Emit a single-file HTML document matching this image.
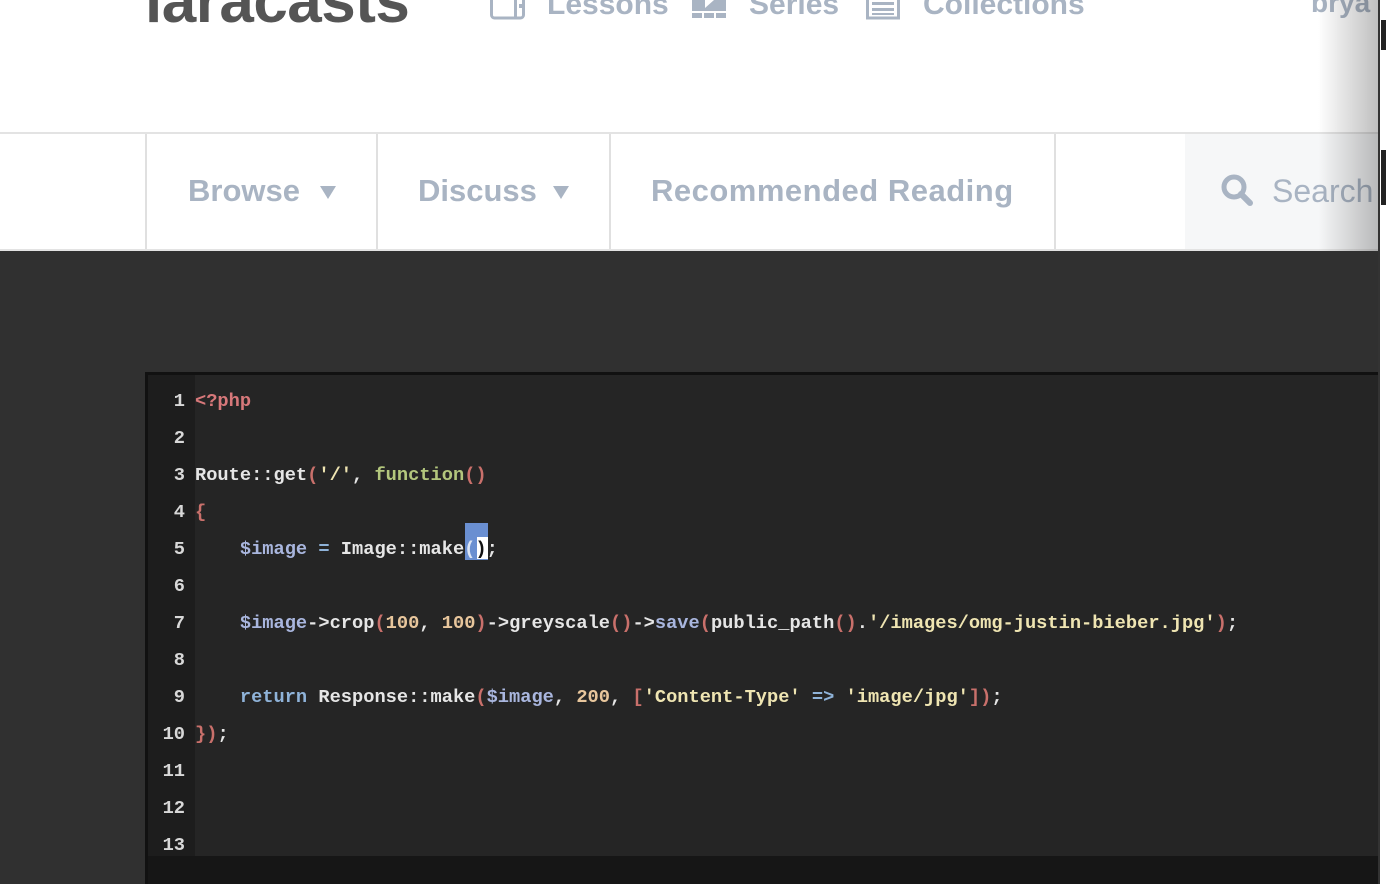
<!DOCTYPE html>
<html><head><meta charset="utf-8"><style>
*{margin:0;padding:0;box-sizing:border-box}
body{width:1386px;height:884px;overflow:hidden;background:#fff;position:relative;font-family:"Liberation Sans",sans-serif}
.a{position:absolute}
.nav{color:#a9b4c3;font-weight:bold;white-space:nowrap}
.code{font-family:"Liberation Mono",monospace;font-size:18.7px;font-weight:bold;white-space:pre;color:#e6e6e6}
.ln{position:absolute;width:40px;text-align:right;left:145px;color:#d8d8d8}
.k{color:#a9b6de}.p{color:#c9706b}.s{color:#efe5b2}.n{color:#e8c69c}.f{color:#b3c77d}.r{color:#8fb3d9}.t{color:#d7787a}
</style></head><body>
<div class="a" style="left:145px;top:-28px;font-size:62px;font-weight:bold;color:#555;letter-spacing:-0.5px;line-height:60px">laracasts</div>
<svg class="a" style="left:490px;top:0" width="36" height="20" viewBox="0 0 36 20"><rect x="1.5" y="-6" width="32" height="24" rx="3" fill="none" stroke="#a9b4c3" stroke-width="3"/><rect x="24" y="-6" width="3" height="24" fill="#a9b4c3"/><rect x="29" y="4" width="3" height="4" fill="#a9b4c3"/></svg>
<div class="a nav" style="left:547px;top:-13px;font-size:30px;line-height:36px">Lessons</div>
<svg class="a" style="left:692px;top:0" width="36" height="20"><rect x="0" y="0" width="34" height="11" fill="#a9b4c3"/><polygon points="13,0 22,0 13,8" fill="#fff"/><rect x="0" y="13" width="10" height="5" fill="#a9b4c3"/><rect x="12" y="13" width="10" height="5" fill="#a9b4c3"/><rect x="24" y="13" width="10" height="5" fill="#a9b4c3"/></svg>
<div class="a nav" style="left:749px;top:-13px;font-size:30px;line-height:36px">Series</div>
<svg class="a" style="left:866px;top:0" width="36" height="20"><rect x="1.5" y="-4" width="31" height="22" fill="none" stroke="#a9b4c3" stroke-width="3"/><rect x="6" y="2" width="22" height="3" fill="#a9b4c3"/><rect x="6" y="8" width="22" height="3" fill="#a9b4c3"/><rect x="6" y="13" width="22" height="2" fill="#a9b4c3"/></svg>
<div class="a nav" style="left:923px;top:-13px;font-size:30px;line-height:36px">Collections</div>
<div class="a nav" style="left:1311px;top:-14px;font-size:28px;line-height:34px">brya</div>
<div class="a" style="left:0;top:132px;width:1386px;height:2px;background:#e3e3e3"></div>
<div class="a" style="left:0;top:249px;width:1386px;height:2px;background:#e3e3e3"></div>
<div class="a" style="left:1185px;top:134px;width:201px;height:115px;background:#f6f7f8"></div>
<div class="a" style="left:145px;top:134px;width:2px;height:115px;background:#e0e0e0"></div>
<div class="a" style="left:376px;top:134px;width:2px;height:115px;background:#e0e0e0"></div>
<div class="a" style="left:609px;top:134px;width:2px;height:115px;background:#e0e0e0"></div>
<div class="a" style="left:1054px;top:134px;width:2px;height:115px;background:#e0e0e0"></div>
<div class="a nav" style="left:188px;top:173px;font-size:31px;line-height:36px">Browse</div>
<div class="a" style="left:320px;top:186px;width:0;height:0;border-left:8px solid transparent;border-right:8px solid transparent;border-top:13px solid #a9b4c3"></div>
<div class="a nav" style="left:418px;top:173px;font-size:31px;line-height:36px">Discuss</div>
<div class="a" style="left:553px;top:186px;width:0;height:0;border-left:8px solid transparent;border-right:8px solid transparent;border-top:13px solid #a9b4c3"></div>
<div class="a nav" style="left:651px;top:173px;font-size:31px;line-height:36px;letter-spacing:0.5px">Recommended Reading</div>
<svg class="a" style="left:1220px;top:173px" width="36" height="36"><circle cx="14" cy="14" r="10" fill="none" stroke="#a9b4c3" stroke-width="5"/><line x1="21" y1="21" x2="30" y2="30" stroke="#a9b4c3" stroke-width="6" stroke-linecap="round"/></svg>
<div class="a" style="left:1272px;top:173px;font-size:32px;line-height:36px;color:#a9b4c3;white-space:nowrap">Search</div>
<div class="a" style="left:0;top:251px;width:1378px;height:633px;background:#303030"></div>
<div class="a" style="left:145px;top:372px;width:1233px;height:512px;background:#111"></div>
<div class="a" style="left:148px;top:375px;width:1230px;height:481px;background:#252525"></div>
<div class="a" style="left:148px;top:375px;width:47px;height:481px;background:#1d1d1d"></div>
<div class="a" style="left:148px;top:856px;width:1230px;height:28px;background:#161616"></div>
<div class="a" style="left:465px;top:523px;width:23px;height:37px;background:#6a8fd1"></div>
<div class="a" style="left:477px;top:537px;width:11px;height:22px;background:#fff"></div>
<div class="code">
<div class="ln" style="top:390px">1</div><div class="ln" style="top:427px">2</div><div class="ln" style="top:464px">3</div><div class="ln" style="top:501px">4</div><div class="ln" style="top:538px">5</div><div class="ln" style="top:575px">6</div><div class="ln" style="top:612px">7</div><div class="ln" style="top:649px">8</div><div class="ln" style="top:686px">9</div><div class="ln" style="top:723px">10</div><div class="ln" style="top:760px">11</div><div class="ln" style="top:797px">12</div><div class="ln" style="top:834px">13</div>
<div class="a" style="left:195px;top:390px"><span class="t">&lt;?php</span></div>
<div class="a" style="left:195px;top:464px">Route::get<span class="p">(</span><span class="s">'/'</span>, <span class="f">function</span><span class="p">()</span></div>
<div class="a" style="left:195px;top:501px"><span class="p">{</span></div>
<div class="a" style="left:195px;top:538px">    <span class="k">$image</span> <span class="r">=</span> Image::make<span style="color:#dde6f5">(</span><span style="color:#111">)</span>;</div>
<div class="a" style="left:195px;top:612px">    <span class="k">$image</span>-&gt;crop<span class="p">(</span><span class="n">100</span>, <span class="n">100</span><span class="p">)</span>-&gt;greyscale<span class="p">()</span>-&gt;<span class="k">save</span><span class="p">(</span>public_path<span class="p">()</span>.<span class="s">'/images/omg-justin-bieber.jpg'</span><span class="p">)</span>;</div>
<div class="a" style="left:195px;top:686px">    <span class="r">return</span> Response::make<span class="p">(</span><span class="k">$image</span>, <span class="n">200</span>, <span class="p">[</span><span class="s">'Content-Type'</span> <span class="r">=&gt;</span> <span class="s">'image/jpg'</span><span class="p">])</span>;</div>
<div class="a" style="left:195px;top:723px"><span class="p">})</span>;</div>
</div>
<div class="a" style="left:1318px;top:0;width:60px;height:251px;background:linear-gradient(to right,rgba(0,0,0,0),rgba(0,0,0,0.25))"></div>
<div class="a" style="left:1378px;top:0;width:8px;height:884px;background:#fff"></div>
<div class="a" style="left:1378px;top:0;width:2px;height:884px;background:#333"></div>
<div class="a" style="left:1381px;top:150px;width:5px;height:55px;background:#222"></div>
<div class="a" style="left:1381px;top:20px;width:5px;height:30px;background:#222"></div>
</body></html>
